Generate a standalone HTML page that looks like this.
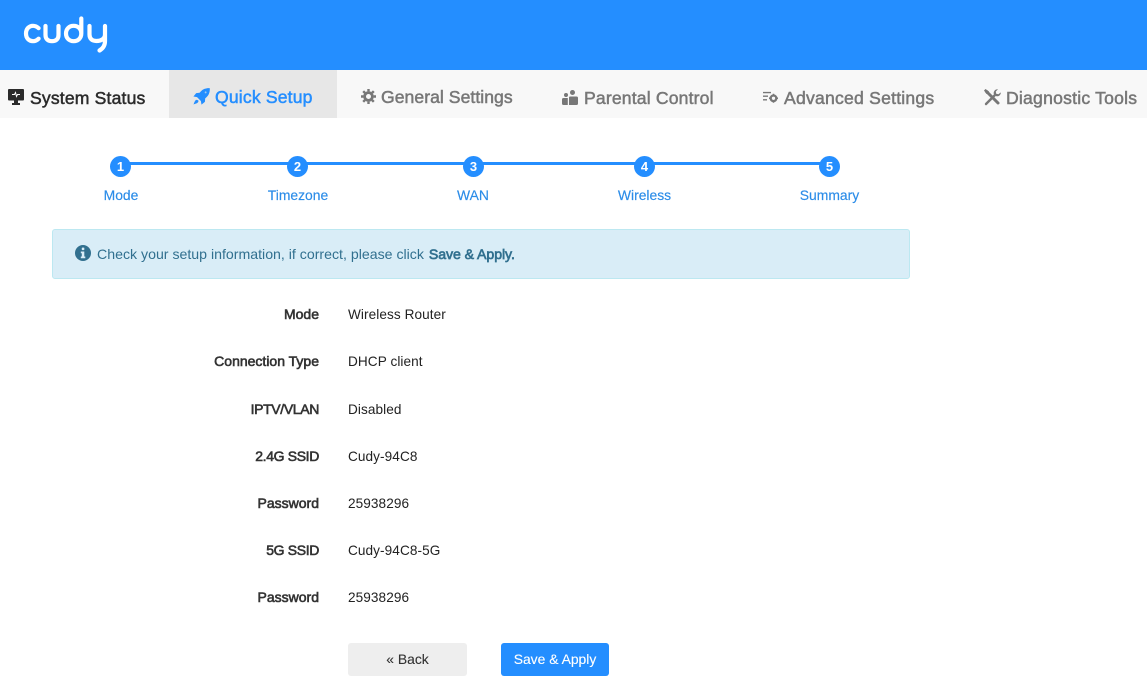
<!DOCTYPE html>
<html lang="en"><head><meta charset="utf-8"><title>Cudy</title>
<style>
html,body{margin:0;padding:0;background:#fff}
body{width:1147px;height:689px;position:relative;overflow:hidden;font-family:"Liberation Sans",sans-serif;-webkit-font-smoothing:antialiased}
.a{position:absolute;white-space:nowrap}
.hdr{left:0;top:0;width:1147px;height:70px;background:#248eff}
.nav{left:0;top:70px;width:1147px;height:48px;background:#f8f8f8}
.act{left:169px;top:70px;width:168px;height:48px;background:#e7e7e7}
.tab{font-size:17.6px;line-height:20px;color:#777;letter-spacing:.16px;-webkit-text-stroke:.5px currentColor}
.step{font-size:13.9px;line-height:16px;color:#2b8ce8;transform:translateX(-50%);top:187px;-webkit-text-stroke:.15px currentColor}
.dot{top:156px;width:21px;height:21px;border-radius:50%;background:#248eff;color:#fff;font-size:13px;font-weight:bold;line-height:21px;text-align:center}
.line{left:121px;top:162px;width:708px;height:3px;background:#248eff}
.alert{left:52px;top:229px;width:856px;height:48px;background:#d9edf7;border:1px solid #bce8f1;border-radius:3px}
.alt{left:97px;top:246px;font-size:14.15px;line-height:16px;color:#31708f}
.alt b{font-weight:normal;-webkit-text-stroke:.65px currentColor;margin-left:1px;letter-spacing:-.08px}
.k{width:200px;left:119px;text-align:right;font-size:14px;line-height:16px;color:#333;font-weight:normal;-webkit-text-stroke:.6px currentColor}
.n{letter-spacing:-.35px}
.v{left:348px;font-size:13.6px;line-height:16px;color:#222;letter-spacing:.08px}
.btn{top:643px;height:33px;border-radius:3px;font-size:13.9px;line-height:33px;text-align:center;-webkit-text-stroke:.12px currentColor}
</style></head><body>
<div class="a hdr"></div>
<svg class="a" style="left:18px;top:12px" width="96" height="44" viewBox="18 12 96 44" fill="none" stroke="#fff" stroke-width="4.200" stroke-linecap="round" stroke-linejoin="round" role="img" aria-label="cudy">
<path d="M38.600 28.200C36.800 26.400 35 25.800 33 25.800C28.900 25.800 26 28.900 26 33.500C26 38.100 28.900 41.200 33 41.200C35 41.200 36.900 40.500 38.600 38.700"/>
<path d="M45.500 26V35C45.500 39 48 41.200 52 41.200C56 41.200 58.500 39 58.500 35V26"/>
<path d="M81.300 18.500V33.500C81.300 38.100 78 41.200 73.600 41.200C69.200 41.200 66 38.100 66 33.500C66 28.900 69.200 25.800 73.600 25.800C78 25.800 81.300 28.900 81.300 33.500"/>
<path d="M89.500 26V34.500C89.500 38.800 92 41 96.500 41C101 41 105 38.800 105 34.500V26M105 34.500V41C105 45 103 48.500 99.500 50.500"/>
</svg>
<div class="a nav"></div>
<div class="a act"></div>

<svg class="a" style="left:8px;top:89px" width="16" height="16" viewBox="0 0 16 16"><path fill="#2b2b2b" d="M1 0H15A1 1 0 0 1 16 1V10.500A1 1 0 0 1 15 11.500H1A1 1 0 0 1 0 10.500V1A1 1 0 0 1 1 0ZM6 11.500H10V14H12V16H4V14H6Z"/><path fill="none" stroke="#fff" stroke-width="1" d="M4 5.500H6.500L7.500 3.500L8.500 7.500L9.500 5.500H12"/></svg>
<span class="a tab" style="left:30px;top:88px;color:#2b2b2b">System Status</span>

<svg class="a" style="left:193px;top:88px" width="17" height="17" viewBox="0 0 16 16"><path fill="#248eff" d="M15.800 0.200C16 3.600 15 6.500 12.800 8.600L11.500 9.800L11.200 13L8 15.600L7.400 12.200L3.800 8.600L0.400 8L3 4.800L6.200 4.500L7.400 3.200C9.500 1 12.400 0 15.800 0.200ZM2.800 11.200C3.700 11 4.600 11.300 5 11.800C5.400 12.300 5 13.200 4.400 13.800C3.600 14.600 1.800 15 0.500 15.500C1 14.200 1.500 12.400 2.800 11.200Z"/><circle cx="11.900" cy="4.100" r=".9" fill="#9cc8f2"/></svg>
<span class="a tab" style="left:215px;top:87px;color:#248eff">Quick Setup</span>

<svg class="a" style="left:361px;top:89px" width="15" height="15" viewBox="0 0 15 15"><circle cx="7.500" cy="7.500" r="3.900" fill="none" stroke="#777" stroke-width="2.800"/><path fill="none" stroke="#777" stroke-width="2.400" d="M7.500 0V15M0 7.500H15M2.200 2.200L12.800 12.800M12.800 2.200L2.200 12.800" stroke-dasharray="2.400 10.200 2.400"/></svg>
<span class="a tab" style="left:381px;top:87px;letter-spacing:.04px">General Settings</span>

<svg class="a" style="left:562px;top:90px" width="16" height="15" viewBox="0 0 16 15"><g fill="#777"><circle cx="4" cy="5" r="2"/><circle cx="10.500" cy="2.500" r="2.500"/><path d="M1.500 8H5.800V15H1.500A1.500 1.500 0 0 1 0 13.500V9.500A1.500 1.500 0 0 1 1.500 8ZM8 6.500H14.500A1.500 1.500 0 0 1 16 8V13.500A1.500 1.500 0 0 1 14.500 15H7V7.500A1 1 0 0 1 8 6.500Z"/></g></svg>
<span class="a tab" style="left:584px;top:88px">Parental Control</span>

<svg class="a" style="left:763px;top:91px" width="16" height="13" viewBox="0 0 16 13"><path stroke="#777" stroke-width="1.400" d="M0 1.600H8M0 5.200H5M0 8.800H4"/><circle cx="10.500" cy="7.300" r="2.800" fill="none" stroke="#777" stroke-width="2.300"/><path stroke="#777" stroke-width="1.500" stroke-dasharray="1.500 6 1.500" d="M10.500 2.800V11.800M6 7.300H15"/></svg>
<span class="a tab" style="left:784px;top:88px;letter-spacing:.22px">Advanced Settings</span>

<svg class="a" style="left:984px;top:89px" width="17" height="17" viewBox="0 0 17 17"><g fill="none" stroke="#777" stroke-linecap="round"><path stroke-width="2.400" d="M2 15L11 6"/><path stroke-width="3" d="M2.500 2.500L14 14"/></g><path fill="#777" d="M16.800 3.400C17 5.800 14.800 7.800 12.400 7.200L9.800 5C9.200 2.500 11.200 0 14 .3L11.800 2.500L12.200 4.700L14.400 5.200Z"/><path fill="#777" d="M0 1.500L1.500 0L5 2.500V5L2.500 5Z"/></svg>
<span class="a tab" style="left:1006px;top:88px;letter-spacing:.22px">Diagnostic Tools</span>

<div class="a line"></div>
<div class="a dot" style="left:110px">1</div>
<div class="a dot" style="left:287px">2</div>
<div class="a dot" style="left:463px">3</div>
<div class="a dot" style="left:634px">4</div>
<div class="a dot" style="left:819px">5</div>
<span class="a step" style="left:121px">Mode</span>
<span class="a step" style="left:298px">Timezone</span>
<span class="a step" style="left:473px">WAN</span>
<span class="a step" style="left:644.500px">Wireless</span>
<span class="a step" style="left:829.500px">Summary</span>

<div class="a alert"></div>
<svg class="a" style="left:75px;top:245px" width="16" height="16" viewBox="0 0 16 16"><circle cx="8" cy="8" r="8" fill="#31708f"/><rect x="6.800" y="2.600" width="2.500" height="2.500" rx=".5" fill="#d9edf7"/><path fill="#d9edf7" d="M5.800 6.500H9.300V11.500H10.300V13.200H5.800V11.500H6.800V8.200H5.800Z"/></svg>
<span class="a alt">Check your setup information, if correct, please click <b>Save &amp; Apply.</b></span>

<span class="a k" style="top:306px">Mode</span><span class="a v" style="top:307px">Wireless Router</span>
<span class="a k" style="top:353px">Connection Type</span><span class="a v" style="top:354px">DHCP client</span>
<span class="a k n" style="top:401px">IPTV/VLAN</span><span class="a v" style="top:402px">Disabled</span>
<span class="a k n" style="top:448px">2.4G SSID</span><span class="a v" style="top:449px">Cudy-94C8</span>
<span class="a k" style="top:495px">Password</span><span class="a v" style="top:496px">25938296</span>
<span class="a k n" style="top:542px">5G SSID</span><span class="a v" style="top:543px">Cudy-94C8-5G</span>
<span class="a k" style="top:589px">Password</span><span class="a v" style="top:590px">25938296</span>

<div class="a btn" style="left:348px;width:119px;background:#eee;color:#333">« Back</div>
<div class="a btn" style="left:501px;width:108px;background:#248eff;color:#fff">Save &amp; Apply</div>
</body></html>
